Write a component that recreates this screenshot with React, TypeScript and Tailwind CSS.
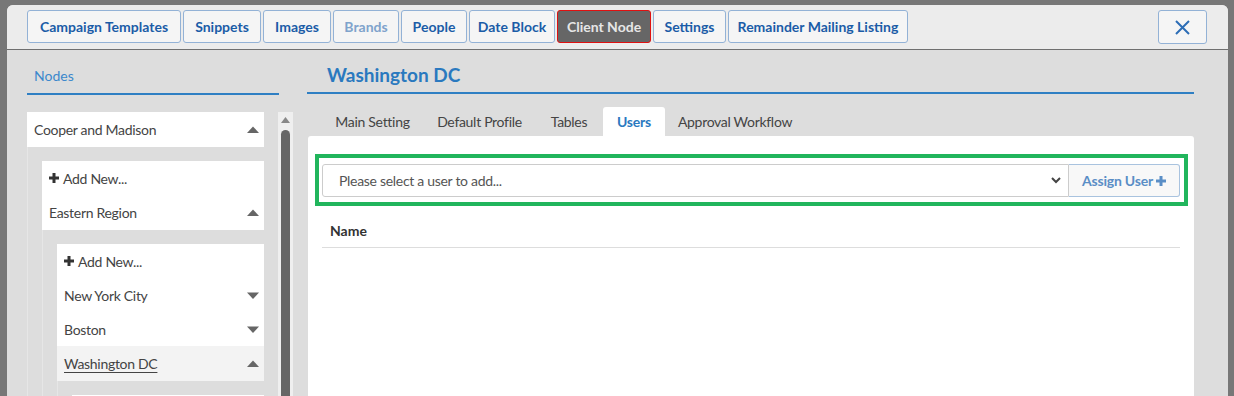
import React from "react";

const TriUp = () => (
  <svg width="12" height="7" viewBox="0 0 12 7" className="shrink-0">
    <path d="M0 7 L6 0.5 L12 7 Z" fill="#666" />
  </svg>
);
const TriDown = () => (
  <svg width="12" height="7" viewBox="0 0 12 7" className="shrink-0">
    <path d="M0 0.5 L12 0.5 L6 7 Z" fill="#666" />
  </svg>
);
const Plus = ({ color }: { color: string }) => (
  <svg width="10" height="10" viewBox="0 0 10 10" className="shrink-0">
    <path d="M5 0 V10 M0 5 H10" stroke={color} strokeWidth="3" />
  </svg>
);

const topTabs: { label: string; w: string; kind?: "disabled" | "active" }[] = [
  { label: "Campaign Templates", w: "w-[154px]" },
  { label: "Snippets", w: "w-[78px]" },
  { label: "Images", w: "w-[68px]" },
  { label: "Brands", w: "w-[66px]", kind: "disabled" },
  { label: "People", w: "w-[66px]" },
  { label: "Date Block", w: "w-[86px]" },
  { label: "Client Node", w: "w-[94px]", kind: "active" },
  { label: "Settings", w: "w-[73px]" },
  { label: "Remainder Mailing Listing", w: "w-[180px]" },
];

function TopTab({ label, w, kind }: { label: string; w: string; kind?: string }) {
  if (kind === "active")
    return (
      <div className={`${w} h-[33px] shrink-0 flex items-center justify-center rounded-[3px] border border-[#e01010] bg-[#666666] text-[14px] font-bold text-[#e6e6e6]`}>
        {label}
      </div>
    );
  return (
    <div
      className={`${w} h-[33px] shrink-0 flex items-center justify-center rounded-[3px] border border-[#93b2d6] bg-[#f5f5f5] text-[14px] font-bold ${
        kind === "disabled" ? "text-[#7fa3cc]" : "text-[#1b5ca7]"
      }`}
    >
      {label}
    </div>
  );
}

function Row({ label, arrow, add, selected, h = "h-[34px]" }: { label: string; arrow?: "up" | "down"; add?: boolean; selected?: boolean; h?: string }) {
  return (
    <div className={`${h} flex items-center justify-between pl-[7px] pr-[5px] ${selected ? "bg-[#f3f3f3]" : "bg-white"}`}>
      <div className="flex items-center gap-[4px] text-[14px] tracking-[-0.3px] text-[#444]">
        {add && <Plus color="#333" />}
        <span className={selected ? "underline underline-offset-[3px] decoration-1" : ""}>{label}</span>
      </div>
      {arrow === "up" && <TriUp />}
      {arrow === "down" && <TriDown />}
    </div>
  );
}

const subTabs: { label: string; w: string }[] = [
  { label: "Main Setting", w: "w-[101px]" },
  { label: "Default Profile", w: "w-[111px]" },
  { label: "Tables", w: "w-[66px]" },
  { label: "Users", w: "w-[62px]" },
  { label: "Approval Workflow", w: "w-[138px]" },
];

export default function App() {
  return (
    <div className="w-[1234px] h-[396px] overflow-hidden bg-[#777777] pt-[5px] pl-[7px] pr-[6px] font-[family-name:Lato,sans-serif]">
      <div className="h-full rounded-t-[6px] bg-[#dddddd] flex flex-col overflow-hidden">
        {/* header */}
        <div className="h-[45px] shrink-0 bg-[#ececec] border-b border-[#6f6f6f] flex items-start pt-[5px] pl-[20px] pr-[21px]">
          <div className="flex gap-[2px]">
            {topTabs.map((t) => (
              <TopTab key={t.label} {...t} />
            ))}
          </div>
          <div className="ml-auto w-[49px] h-[34px] rounded-[3px] border border-[#93b2d6] bg-[#f5f5f5] flex items-center justify-center">
            <svg width="15" height="15" viewBox="0 0 15 15">
              <path d="M1 1 L14 14 M14 1 L1 14" stroke="#2c6db6" strokeWidth="2" />
            </svg>
          </div>
        </div>

        {/* body */}
        <div className="flex-1 flex pl-[20px] min-h-0">
          {/* left */}
          <div className="w-[266px] shrink-0 flex flex-col">
            <div className="w-[252px] h-[45px] border-b-2 border-[#2f7fc3] pt-[16px] pl-[7px] text-[14px] leading-[20px] text-[#3b88cc]">
              Nodes
            </div>
            <div className="mt-[17px] flex flex-1 min-h-0">
              <div className="w-[237px] shrink-0">
                <Row label="Cooper and Madison" arrow="up" h="h-[35px]" />
                <div className="pl-[14px] pt-[14px] border-l border-[#e6e6e6]">
                  <div className="bg-white">
                    <Row label="Add New..." add />
                    <Row label="Eastern Region" arrow="up" h="h-[35px]" />
                  </div>
                  <div className="pl-[14px] pt-[14px] border-l border-[#e6e6e6]">
                    <Row label="Add New..." add />
                    <Row label="New York City" arrow="down" />
                    <Row label="Boston" arrow="down" />
                    <Row label="Washington DC" arrow="up" selected h="h-[35px]" />
                    <div className="pl-[14px] pt-[14px] border-l border-[#e6e6e6]">
                      <div className="h-[40px] bg-white" />
                    </div>
                  </div>
                </div>
              </div>
              <div className="ml-[14px] w-[15px] shrink-0 bg-[#efefef] flex flex-col items-center pt-[5px]">
                <svg width="9" height="6" viewBox="0 0 9 6">
                  <path d="M0 6 L4.5 0 L9 6 Z" fill="#888" />
                </svg>
                <div className="mt-[7px] w-[9px] flex-1 rounded-t-full bg-[#666666]" />
              </div>
            </div>
          </div>

          {/* right */}
          <div className="ml-[14px] w-[887px] shrink-0 flex flex-col">
            <div className="h-[44px] border-b-2 border-[#2f7fc3] pt-[13px] pl-[20px] text-[19px] leading-[24px] font-bold text-[#2a79bf]">
              Washington DC
            </div>
            <div className="mt-[13px] flex gap-[1px] pl-[15px]">
              {subTabs.map((t) =>
                t.label === "Users" ? (
                  <div key={t.label} className={`${t.w} h-[29px] flex items-center justify-center rounded-t-[3px] bg-white text-[14px] tracking-[-0.2px] font-bold text-[#2a79bf]`}>
                    {t.label}
                  </div>
                ) : (
                  <div key={t.label} className={`${t.w} h-[29px] flex items-center justify-center text-[14px] tracking-[-0.3px] text-[#444]`}>
                    {t.label}
                  </div>
                )
              )}
            </div>
            <div className="flex-1 ml-[1px] bg-white rounded-t-[3px] pt-[18px] pl-[7px] pr-[6px]">
              <div className="border-[4px] border-[#21b55c] pt-[6px] pb-[5px] pl-[3px] pr-[4px] flex">
                <div className="flex-1 h-[33px] border border-[#cccccc] rounded-l-[3px] flex items-center justify-between pl-[16px] pr-[7px] text-[14px] tracking-[-0.3px] text-[#555]">
                  <span>Please select a user to add...</span>
                  <svg width="10" height="7" viewBox="0 0 10 7">
                    <path d="M1 1 L5 5 L9 1" stroke="#444" strokeWidth="2" fill="none" />
                  </svg>
                </div>
                <div className="w-[111px] h-[33px] border border-l-0 border-[#a9c3df] rounded-r-[3px] bg-[#f8f8f8] flex items-center justify-center gap-[3px] text-[14px] tracking-[-0.2px] font-bold text-[#5a8ec6]">
                  <span>Assign User</span>
                  <Plus color="#5a8ec6" />
                </div>
              </div>
              <div className="mt-[7px] ml-[7px] mr-[8px] h-[35px] border-b border-[#dddddd] flex items-center pl-[8px] text-[14px] font-bold text-[#333]">
                Name
              </div>
            </div>
          </div>
        </div>
      </div>
    </div>
  );
}
